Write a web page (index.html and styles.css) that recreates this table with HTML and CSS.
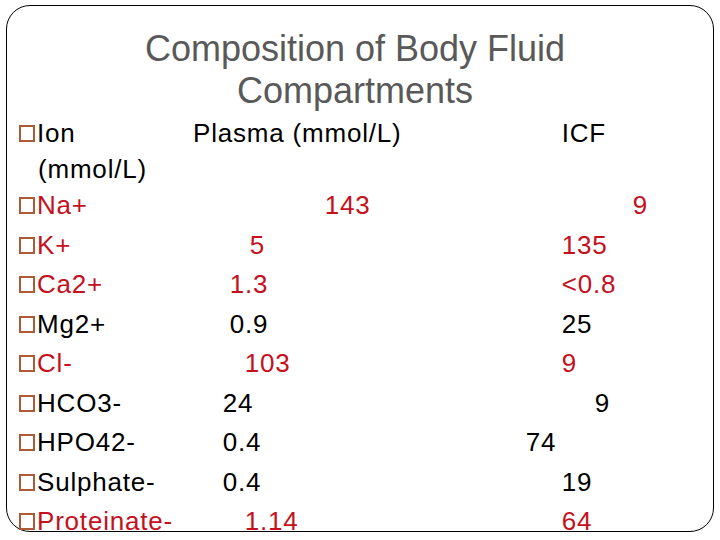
FILE: index.html
```html
<!DOCTYPE html>
<html lang="en">
<head>
    <meta charset="UTF-8">
    <title>Composition of Body Fluid Compartments</title>
    <link rel="stylesheet" href="styles.css">
</head>
<body>
    <div class="slide">
        <h1 class="title">Composition of Body Fluid<br>Compartments</h1>

        <div class="head">
            <div class="head-line">
                <span class="label"><span class="bullet"></span>Ion</span>
                <span>Plasma (mmol/L)</span>
                <span>ICF</span>
            </div>
            <div class="head-wrap">(mmol/L)</div>
        </div>

        <div class="rows">
            <div class="row red">
                <span class="label"><span class="bullet"></span>Na+</span>
                <span class="i14">143</span>
                <span class="i15">9</span>
            </div>
            <div class="row red">
                <span class="label"><span class="bullet"></span>K+</span>
                <span class="i4">5</span>
                <span class="i5">135</span>
            </div>
            <div class="row red">
                <span class="label"><span class="bullet"></span>Ca2+</span>
                <span class="i1">1.3</span>
                <span class="i5">&lt;0.8</span>
            </div>
            <div class="row">
                <span class="label"><span class="bullet"></span>Mg2+</span>
                <span class="i1">0.9</span>
                <span class="i5">25</span>
            </div>
            <div class="row red">
                <span class="label"><span class="bullet"></span>Cl-</span>
                <span class="i3">103</span>
                <span class="i5">9</span>
            </div>
            <div class="row">
                <span class="label"><span class="bullet"></span>HCO3-</span>
                <span>24</span>
                <span class="i10">9</span>
            </div>
            <div class="row">
                <span class="label"><span class="bullet"></span>HPO42-</span>
                <span>0.4</span>
                <span>74</span>
            </div>
            <div class="row">
                <span class="label"><span class="bullet"></span>Sulphate-</span>
                <span>0.4</span>
                <span class="i5">19</span>
            </div>
            <div class="row red">
                <span class="label"><span class="bullet"></span>Proteinate-</span>
                <span class="i3">1.14</span>
                <span class="i5">64</span>
            </div>
        </div>
    </div>
</body>
</html>
```
FILE: styles.css
```css
* {
    margin: 0;
    padding: 0;
    box-sizing: border-box;
}

body {
    font-family: 'Liberation Sans', Arial, sans-serif;
    background: #fff;
    color: #000;
    width: 720px;
    height: 540px;
    overflow: hidden;
}

.slide {
    width: 708px;
    height: 527px;
    margin: 5px 6px;
    border: 1px solid #000;
    border-radius: 24px;
    padding-top: 22px;
}

.title {
    font-size: 36px;
    font-weight: normal;
    line-height: 42px;
    color: #595959;
    text-align: center;
    padding-right: 10px;
}

/* body text */
.head,
.rows {
    font-size: 26px;
    letter-spacing: 0.8px;
    padding-left: 12px;
}

.head {
    margin-top: 3px;
    line-height: 36px;
    margin-bottom: -1px;
}

.head-line {
    display: grid;
    grid-template-columns: 174px 368.7px 1fr;
}

.head-wrap {
    padding-left: 19px;
}

.row {
    display: grid;
    grid-template-columns: 203.7px 303px 1fr;
    line-height: 39.5px;
    white-space: nowrap;
}

.row.red {
    color: #c4111d;
}

.bullet {
    display: inline-block;
    width: 16px;
    height: 17px;
    border: 2px solid #ad5b37;
    margin-right: 2px;
}

/* tab-like indents of the values */
.i1 { padding-left: 7px; }
.i3 { padding-left: 22px; }
.i4 { padding-left: 27px; }
.i5 { padding-left: 36px; }
.i10 { padding-left: 69px; }
.i14 { padding-left: 102px; }
.i15 { padding-left: 107px; }
```
